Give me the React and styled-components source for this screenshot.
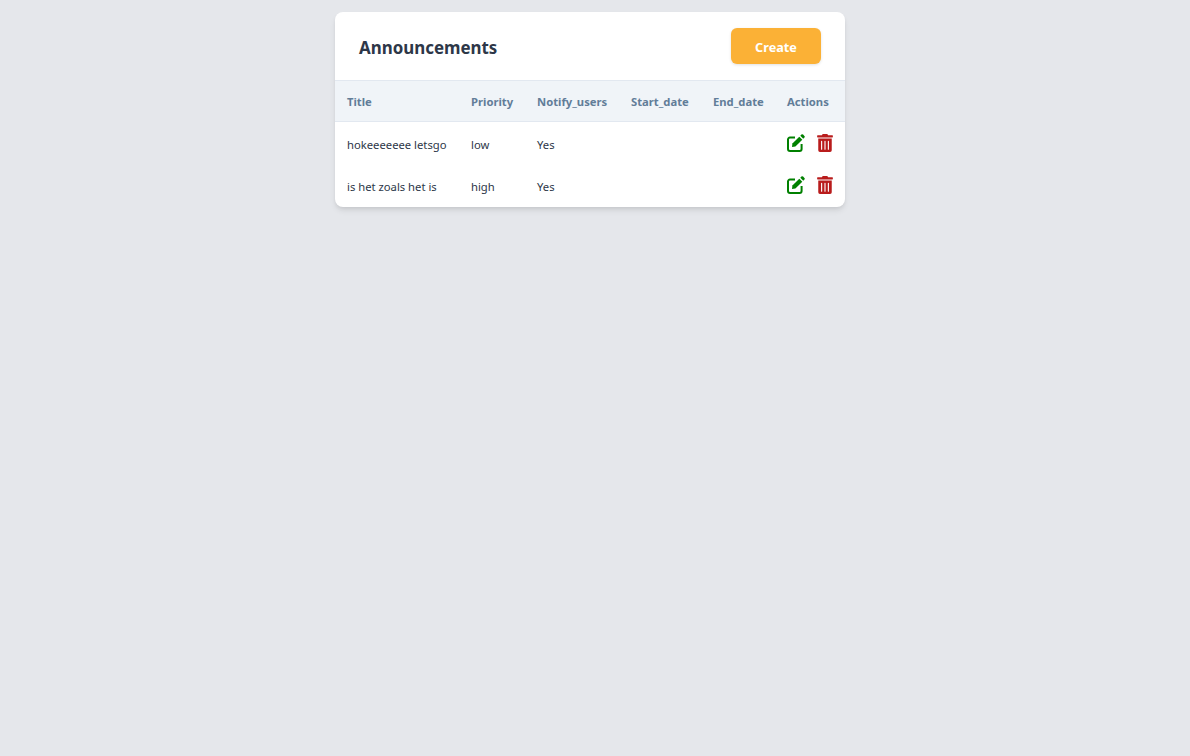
import React from "react";
import styled, { createGlobalStyle } from "styled-components";
import { FaTrashAlt } from "react-icons/fa";

const announcements = [
  { id: 1, title: "hokeeeeeee letsgo", priority: "low", notify: "Yes" },
  { id: 2, title: "is het zoals het is", priority: "high", notify: "Yes" },
];

const columns = [
  { label: "Title", width: 124 },
  { label: "Priority", width: 66 },
  { label: "Notify_users", width: 94 },
  { label: "Start_date", width: 82 },
  { label: "End_date", width: 74 },
  { label: "Actions", width: 70 },
];

const EditIcon = () => (
  <svg width="18" height="18" viewBox="0 0 18 18" fill="currentColor">
    <path
      d="M8 3.6H3a2 2 0 0 0-2 2V15a2 2 0 0 0 2 2h9.6a2 2 0 0 0 2-2v-5"
      fill="none"
      stroke="currentColor"
      strokeWidth="2"
    />
    <path d="M5.4 9.6 12.3 2.7l3 3-6.9 6.9-3.4.5z" />
    <path d="M13.3 1.7 14.4.6a1.2 1.2 0 0 1 1.7 0l1.3 1.3a1.2 1.2 0 0 1 0 1.7l-1.1 1.1z" />
  </svg>
);

export default function App() {
  return (
    <Page>
      <GlobalStyle />
      <Card>
        <CardHeader>
          <Title>Announcements</Title>
          <CreateButton>Create</CreateButton>
        </CardHeader>
        <Table>
          <colgroup>
            {columns.map((c) => (
              <col key={c.label} width={c.width} />
            ))}
          </colgroup>
          <thead>
            <tr>
              {columns.map((c) => (
                <Th key={c.label}>{c.label}</Th>
              ))}
            </tr>
          </thead>
          <tbody>
            {announcements.map((a) => (
              <tr key={a.id}>
                <Td>{a.title}</Td>
                <Td>{a.priority}</Td>
                <Td>{a.notify}</Td>
                <Td />
                <Td />
                <Td>
                  <Actions>
                    <IconButton $color="#008000">
                      <EditIcon />
                    </IconButton>
                    <IconButton $color="#b91c1c">
                      <FaTrashAlt size={18} />
                    </IconButton>
                  </Actions>
                </Td>
              </tr>
            ))}
          </tbody>
        </Table>
      </Card>
    </Page>
  );
}

const GlobalStyle = createGlobalStyle`
  html, body {
    margin: 0;
    padding: 0;
    background: #e5e7eb;
  }
  body {
    font-family: "Noto Sans", "Open Sans", sans-serif;
  }
`;

const Page = styled.div`
  min-height: 756px;
  display: flex;
  justify-content: center;
  align-items: flex-start;
  padding: 12px 10px 0 0;
  box-sizing: border-box;
`;

const Card = styled.div`
  width: 510px;
  padding-bottom: 1px;
  background: #fff;
  border-radius: 8px;
  overflow: hidden;
  box-shadow: 0 4px 6px -1px rgba(0, 0, 0, 0.1), 0 2px 4px -1px rgba(0, 0, 0, 0.06);
`;

const CardHeader = styled.div`
  height: 68px;
  box-sizing: border-box;
  display: flex;
  justify-content: space-between;
  align-items: flex-start;
  padding: 16px 24px 0;
`;

const Title = styled.h1`
  margin: 6px 0 0;
  font-size: 16.9px;
  line-height: 28px;
  font-weight: 700;
  color: #2d3748;
`;

const CreateButton = styled.button`
  width: 90px;
  height: 36px;
  padding: 1px 0 0;
  border: none;
  border-radius: 6px;
  background: #fbb136;
  color: #fff;
  font-family: inherit;
  font-size: 12.7px;
  font-weight: 700;
  box-shadow: 0 1px 3px rgba(0, 0, 0, 0.12);
`;

const Table = styled.table`
  width: 510px;
  table-layout: fixed;
  border-collapse: collapse;
`;

const Th = styled.th`
  height: 41px;
  box-sizing: border-box;
  padding: 0 0 0 12px;
  background: #f0f4f8;
  border-top: 1px solid #e2e8f0;
  border-bottom: 1px solid #e2e8f0;
  text-align: left;
  font-size: 11.25px;
  font-weight: 700;
  color: #627d98;
  white-space: nowrap;
`;

const Td = styled.td`
  height: 42px;
  box-sizing: border-box;
  padding: 4px 0 0 12px;
  font-size: 11.25px;
  color: #2d3748;
  white-space: nowrap;
`;

const Actions = styled.div`
  display: flex;
  align-items: center;
  gap: 11px;
  margin-top: -4px;
`;

const IconButton = styled.span`
  display: flex;
  color: ${(p) => p.$color};
`;
